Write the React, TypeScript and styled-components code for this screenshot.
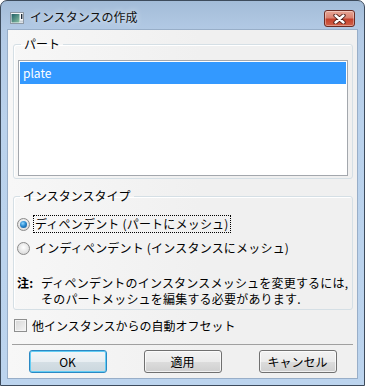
import React from 'react';
import styled, { createGlobalStyle } from 'styled-components';

const GlobalStyle = createGlobalStyle`
  html, body {
    margin: 0;
    padding: 0;
    background: #ffffff;
  }
  body {
    font-family: "Noto Sans CJK JP", "Noto Sans", sans-serif;
    font-size: 12px;
    color: #000;
  }
`;

/* ------------------------------- Window frame ------------------------------ */
const Window = styled.div`
  width: 365px;
  height: 386px;
  box-sizing: border-box;
  border: 1px solid #3d4b5c;
  border-radius: 7px 7px 0 0;
  background: linear-gradient(to bottom, #a3bcd8 0px, #b3cae5 30px, #bad2ec 120px, #bcd4ee 100%);
  display: flex;
  flex-direction: column;
  padding: 0 7px 7px;
`;

const TitleBar = styled.div`
  height: 29px;
  display: flex;
  align-items: flex-start;
  padding-left: 2px;
`;

const TitleText = styled.span`
  margin: 8px 0 0 6px;
  line-height: 16px;
  font-size: 12px;
  color: #111;
  text-shadow: 0 0 6px rgba(255, 255, 255, 0.9);
`;

const CloseButton = styled.div`
  margin: 9px 2px 0 auto;
  width: 31px;
  height: 17px;
  box-sizing: border-box;
  border: 1px solid #6b2b23;
  border-radius: 3px;
  background: linear-gradient(to bottom, #e8a796 0%, #d98271 45%, #c4412c 55%, #d1624a 100%);
  box-shadow: inset 0 0 0 1px rgba(255, 255, 255, 0.35);
  display: flex;
  align-items: center;
  justify-content: center;
`;

const Client = styled.div`
  flex: 1;
  display: flex;
  flex-direction: column;
  background: linear-gradient(to right, #f7f7f7 0%, #f0f0f0 55%);
  box-shadow: 0 0 0 1px #98aec8;
`;

/* -------------------------------- Group box -------------------------------- */
const GroupBox = styled.fieldset<{ $top: number; $pad: string }>`
  margin: ${(p) => p.$top}px 4px 0 5px;
  padding: ${(p) => p.$pad};
  min-width: 0;
  border: 1px solid #d5dfe5;
  border-radius: 3px;
  box-shadow: inset 1px 1px 0 #ffffff;
`;

const Legend = styled.legend`
  margin-left: 3px;
  padding: 0 3px;
  line-height: 16px;
  font-size: 12px;
`;

const ListBox = styled.div`
  height: 116px;
  box-sizing: border-box;
  border: 1px solid #a3a7ad;
  background: #fff;
  padding: 1px;
`;

const ListItem = styled.div<{ $selected?: boolean }>`
  height: 22px;
  line-height: 22px;
  padding-left: 3px;
  font-size: 12px;
  background: ${(p) => (p.$selected ? '#3399ff' : 'transparent')};
  color: ${(p) => (p.$selected ? '#fff' : '#000')};
`;

/* ------------------------------ Radio + check ------------------------------ */
const OptionRow = styled.label<{ $gap?: number; $indent?: number }>`
  display: flex;
  align-items: center;
  height: 18px;
  gap: 4px;
  margin-top: ${(p) => p.$gap ?? 0}px;
  margin-left: ${(p) => p.$indent ?? 0}px;
`;

const Radio = styled.span<{ $checked?: boolean }>`
  width: 13px;
  height: 13px;
  box-sizing: border-box;
  border-radius: 50%;
  border: 1px solid #8a8a8a;
  background: radial-gradient(circle at 50% 40%, #ffffff 0%, #e4e4e4 60%, #cfcfcf 100%);
  display: flex;
  align-items: center;
  justify-content: center;
  &::after {
    content: '';
    display: ${(p) => (p.$checked ? 'block' : 'none')};
    width: 7px;
    height: 7px;
    border-radius: 50%;
    background: radial-gradient(circle at 40% 35%, #8fd6ff 0%, #2a8ad0 45%, #0d4a86 100%);
  }
`;

const OptionText = styled.span<{ $focused?: boolean }>`
  padding: 0 1px;
  line-height: 16px;
  letter-spacing: 0.2px;
  outline: ${(p) => (p.$focused ? '1px dotted #000' : 'none')};
`;

const Check = styled.span`
  width: 13px;
  height: 13px;
  margin-right: 1px;
  box-sizing: border-box;
  border: 1px solid #8e8f8f;
  background: linear-gradient(135deg, #d6d6d6 0%, #f4f4f4 100%);
  box-shadow: inset 0 0 0 1px #f4f4f4;
`;

const Note = styled.div`
  margin-top: 18px;
  display: grid;
  grid-template-columns: 24px 1fr;
  line-height: 16px;
  letter-spacing: 0.2px;
  b {
    font-weight: 700;
  }
`;

const Separator = styled.div`
  margin: 10px 4px 0;
  height: 1px;
  background: #a0a0a0;
`;

/* --------------------------------- Buttons --------------------------------- */
const ButtonRow = styled.div`
  margin-top: 5px;
  display: flex;
  justify-content: center;
  gap: 37px;
`;

const Button = styled.button<{ $default?: boolean }>`
  width: 78px;
  height: 23px;
  box-sizing: border-box;
  border: 1px solid ${(p) => (p.$default ? '#2b89c4' : '#707070')};
  border-radius: 3px;
  font-family: inherit;
  font-size: 12px;
  color: #000;
  padding: 0;
  background: ${(p) =>
    p.$default
      ? 'linear-gradient(to bottom, #f2f6f8 0%, #e8eef2 50%, #d5dfe5 50%, #cbd7de 100%)'
      : 'linear-gradient(to bottom, #f2f2f2 0%, #ebebeb 50%, #dddddd 50%, #cfcfcf 100%)'};
  box-shadow: ${(p) =>
    p.$default ? 'inset 0 0 0 1px #63cdf4' : 'inset 0 0 0 1px rgba(255, 255, 255, 0.7)'};
`;

const AppIcon = () => (
  <svg width="14" height="12" viewBox="0 0 14 12" style={{ marginTop: 11 }}>
    <defs>
      <linearGradient id="ig" x1="0" y1="0" x2="1" y2="1">
        <stop offset="0" stopColor="#1f5e66" />
        <stop offset="1" stopColor="#8cc3a4" />
      </linearGradient>
    </defs>
    <rect x="0.5" y="0.5" width="13" height="11" fill="#f4f6f8" stroke="#8d98a4" />
    <rect x="1.5" y="2" width="8" height="8.5" fill="url(#ig)" />
    <rect x="11" y="2" width="1.4" height="5" fill="#1e2c3a" />
    <rect x="10" y="8.5" width="3" height="2" fill="#c8d0d8" />
  </svg>
);

const CloseGlyph = () => (
  <svg width="13" height="10" viewBox="0 0 13 10">
    <path d="M2.5 1.5 L10.5 8.5 M10.5 1.5 L2.5 8.5" stroke="#4a1a14" strokeWidth="4.2" strokeLinecap="round" />
    <path d="M2.5 1.5 L10.5 8.5 M10.5 1.5 L2.5 8.5" stroke="#ffffff" strokeWidth="2.4" strokeLinecap="round" />
  </svg>
);

const App = () => {
  return (
    <>
      <GlobalStyle />
      <Window>
        <TitleBar>
          <AppIcon />
          <TitleText>インスタンスの作成</TitleText>
          <CloseButton>
            <CloseGlyph />
          </CloseButton>
        </TitleBar>
        <Client>
          <GroupBox $top={6} $pad="8px 4px 2px 4px">
            <Legend>パート</Legend>
            <ListBox>
              <ListItem $selected>plate</ListItem>
            </ListBox>
          </GroupBox>

          <GroupBox $top={9} $pad="11px 3px 2px 3px">
            <Legend>インスタンスタイプ</Legend>
            <OptionRow>
              <Radio $checked />
              <OptionText $focused>ディペンデント (パートにメッシュ)</OptionText>
            </OptionRow>
            <OptionRow $gap={6}>
              <Radio />
              <OptionText>インディペンデント (インスタンスにメッシュ)</OptionText>
            </OptionRow>
            <Note>
              <b>注:</b>
              <span>
                ディペンデントのインスタンスメッシュを変更するには,
                <br />
                そのパートメッシュを編集する必要があります.
              </span>
            </Note>
          </GroupBox>

          <OptionRow $gap={6} $indent={6}>
            <Check />
            <span>他インスタンスからの自動オフセット</span>
          </OptionRow>

          <Separator />

          <ButtonRow>
            <Button $default>OK</Button>
            <Button>適用</Button>
            <Button>キャンセル</Button>
          </ButtonRow>
        </Client>
      </Window>
    </>
  );
};

export default App;
